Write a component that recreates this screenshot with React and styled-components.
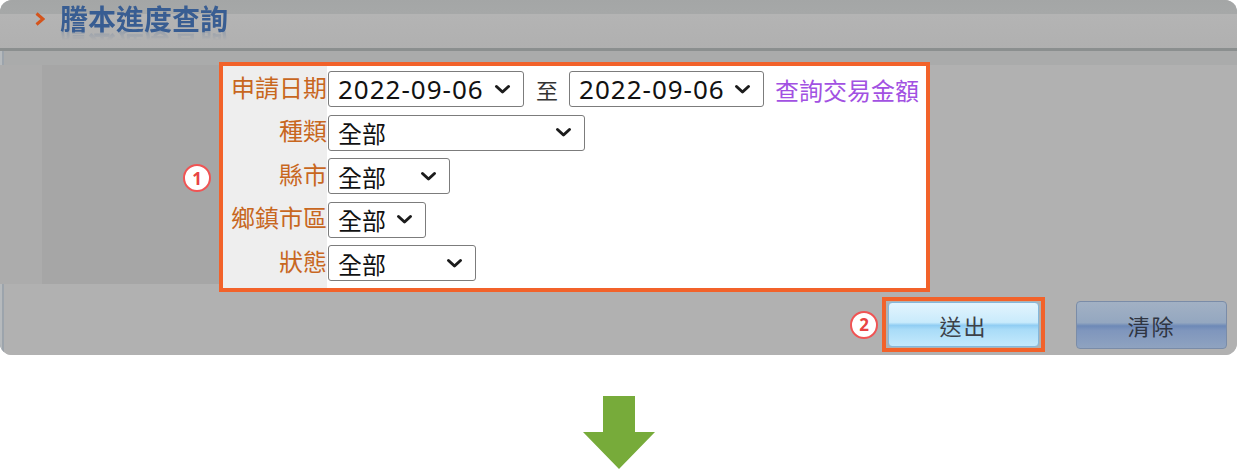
import styled, { createGlobalStyle } from "styled-components";

const GlobalStyle = createGlobalStyle`
  body {
    margin: 0;
    background: #fff;
    font-family: "Noto Sans", "Noto Sans CJK TC", sans-serif;
  }
`;

const Page = styled.div`
  width: 1237px;
  height: 469px;
  display: flex;
  flex-direction: column;
  align-items: center;
`;

const Panel = styled.div`
  width: 1237px;
  height: 355px;
  border-radius: 12px;
  background: #b1b1b1;
  overflow: hidden;
  display: flex;
  flex-direction: column;
`;

const Header = styled.div`
  height: 48px;
  flex-shrink: 0;
  display: flex;
  align-items: flex-start;
  gap: 15px;
  padding-left: 35px;
  background: linear-gradient(#a4a6a6 0, #a6a8a8 14px, #b4b4b4 14px, #b0b0b0 48px);
  border-bottom: 3px solid #8b8f8f;
`;

const Chevron = styled.svg`
  margin-top: 12px;
`;

const Title = styled.h1`
  margin: 4px 0 0;
  font-size: 28px;
  line-height: 1.1;
  font-weight: 700;
  color: #385d92;
  -webkit-box-reflect: below -9px linear-gradient(transparent 55%, rgba(255, 255, 255, 0.35));
`;

const Body = styled.div`
  flex: 1;
  display: flex;
  flex-direction: column;
  background: linear-gradient(#aaabab 0, #aaabab 14px, #b1b1b1 14px);
  box-shadow: inset 2px 0 0 #b6babd, inset 4px 0 0 #9ca4ac;
`;

const FormRow = styled.div`
  display: flex;
  align-items: flex-start;
  padding-top: 11px;
`;

const LeftCol = styled.div`
  margin-top: 3px;
  padding-left: 42px;
  height: 219px;
  background: #acacac;
  display: flex;
`;

const ShadeBox = styled.div`
  width: 177px;
  background: #a6a6a6;
  display: flex;
  align-items: center;
  justify-content: flex-end;
  padding-right: 8px;
  box-sizing: border-box;
`;

const Badge = styled.div`
  width: 28px;
  height: 28px;
  box-sizing: border-box;
  border-radius: 50%;
  border: 2.5px solid #f05454;
  background: #fff;
  color: #e84343;
  font-size: 17px;
  font-weight: 700;
  display: flex;
  align-items: center;
  justify-content: center;
  margin-top: ${(p) => p.$offset || 0}px;
`;

const FormBox = styled.div`
  width: 711px;
  height: 230px;
  box-sizing: border-box;
  border: 4px solid #f2622a;
  background: linear-gradient(to right, #eeeeee 104px, #ffffff 104px);
  padding-top: 5px;
  display: flex;
  flex-direction: column;
  gap: 7.5px;
`;

const Row = styled.div`
  display: flex;
  align-items: center;
  height: 36px;
`;

const Label = styled.div`
  width: 105px;
  flex-shrink: 0;
  box-sizing: border-box;
  text-align: right;
  padding-right: 1px;
  font-size: 24px;
  line-height: 1;
  color: #c8671f;
  margin-top: -3px;
`;

const Select = styled.div`
  width: ${(p) => p.$w}px;
  height: 36px;
  box-sizing: border-box;
  flex-shrink: 0;
  border: 1px solid #7c7c7c;
  border-radius: 3px;
  background: #fff;
  display: flex;
  align-items: center;
  justify-content: space-between;
  padding: 0 12px 0 9px;
  font-size: 24px;
  color: #111;
`;

const DateText = styled.span`
  font-size: 26px;
  letter-spacing: 1px;
  line-height: 1;
`;

const Sep = styled.span`
  font-size: 22px;
  color: #333;
  margin: 0 11px 0 12px;
`;

const Link = styled.a`
  margin-left: 11px;
  font-size: 24px;
  color: #a251e2;
  text-decoration: none;
`;

const ButtonRow = styled.div`
  display: flex;
  justify-content: flex-end;
  align-items: center;
  padding-right: 10px;
  margin-top: 5px;
`;

const Highlight = styled.div`
  border: 4px solid #f2622a;
  padding: 1px 2px;
  margin-left: 4px;
  margin-right: 31px;
  display: flex;
`;

const Button = styled.button`
  width: 151px;
  height: ${(p) => p.$h}px;
  border-radius: 4px;
  font-family: inherit;
  font-size: 22px;
  letter-spacing: 2px;
  padding: 0;
  border: 1px solid ${(p) => (p.$dim ? "#7a8ca8" : "#84b8dc")};
  color: ${(p) => (p.$dim ? "#2f3542" : "#3d4148")};
  background: ${(p) =>
    p.$dim
      ? "linear-gradient(#a2b1c4 0%, #94a7c0 45%, #6d89b7 52%, #7f96bd 62%, #8fa3c0 100%)"
      : "linear-gradient(#e3f4fd 0%, #c9ebfc 45%, #90cdf3 52%, #a9dcf8 62%, #c4e9fc 100%)"};
`;

const ArrowWrap = styled.div`
  margin-top: 41px;
  display: flex;
`;

function Caret() {
  return (
    <svg width="17" height="11" viewBox="0 0 17 11">
      <path d="M2.5 2.5 L8.5 8 L14.5 2.5" fill="none" stroke="#1c1c1c" strokeWidth="3" strokeLinecap="round" strokeLinejoin="round" />
    </svg>
  );
}

export default function App() {
  return (
    <Page>
      <GlobalStyle />
      <Panel>
        <Header>
          <Chevron width="10" height="14" viewBox="0 0 10 14">
            <path d="M1.5 1.5 L8 7 L1.5 12.5" fill="none" stroke="#d4541c" strokeWidth="3" strokeLinejoin="miter" />
          </Chevron>
          <Title>謄本進度查詢</Title>
        </Header>
        <Body>
          <FormRow>
            <LeftCol>
              <ShadeBox>
                <Badge $offset={7}>1</Badge>
              </ShadeBox>
            </LeftCol>
            <FormBox>
              <Row>
                <Label>申請日期</Label>
                <Select $w={196}>
                  <DateText>2022-09-06</DateText>
                  <Caret />
                </Select>
                <Sep>至</Sep>
                <Select $w={195}>
                  <DateText>2022-09-06</DateText>
                  <Caret />
                </Select>
                <Link href="#">查詢交易金額</Link>
              </Row>
              <Row>
                <Label>種類</Label>
                <Select $w={257}>
                  <span>全部</span>
                  <Caret />
                </Select>
              </Row>
              <Row>
                <Label>縣市</Label>
                <Select $w={122}>
                  <span>全部</span>
                  <Caret />
                </Select>
              </Row>
              <Row>
                <Label>鄉鎮市區</Label>
                <Select $w={98}>
                  <span>全部</span>
                  <Caret />
                </Select>
              </Row>
              <Row>
                <Label>狀態</Label>
                <Select $w={148}>
                  <span>全部</span>
                  <Caret />
                </Select>
              </Row>
            </FormBox>
          </FormRow>
          <ButtonRow>
            <Badge>2</Badge>
            <Highlight>
              <Button $h={45}>送出</Button>
            </Highlight>
            <Button $dim $h={48}>清除</Button>
          </ButtonRow>
        </Body>
      </Panel>
      <ArrowWrap>
        <svg width="72" height="73" viewBox="0 0 72 73">
          <path d="M20 0 H52 V36 H72 L36 73 L0 36 H20 Z" fill="#77ab3a" />
        </svg>
      </ArrowWrap>
    </Page>
  );
}
